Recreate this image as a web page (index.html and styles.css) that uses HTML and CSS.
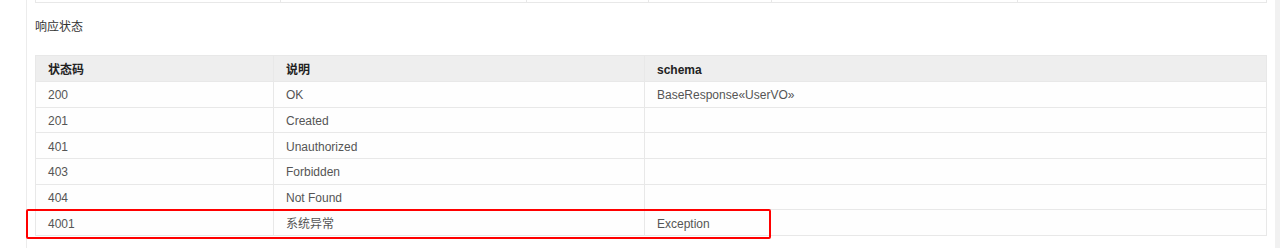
FILE: index.html
```html
<!DOCTYPE html>
<html lang="zh">
<head>
<meta charset="utf-8">
<title>响应状态</title>
<link rel="stylesheet" href="styles.css">
</head>
<body>
<div class="page">
  <div class="main">
    <div class="prev-table">
      <div class="pc w1"></div>
      <div class="pc w2"></div>
      <div class="pc w3"></div>
      <div class="pc w4"></div>
      <div class="pc w5"></div>
      <div class="pc w6"></div>
    </div>
    <div class="section-title">响应状态</div>
    <div class="table-wrap">
      <table class="resp">
        <colgroup>
          <col class="c1"><col class="c2"><col class="c3">
        </colgroup>
        <thead>
          <tr><th>状态码</th><th>说明</th><th>schema</th></tr>
        </thead>
        <tbody>
          <tr><td>200</td><td>OK</td><td>BaseResponse«UserVO»</td></tr>
          <tr><td>201</td><td>Created</td><td></td></tr>
          <tr><td>401</td><td>Unauthorized</td><td></td></tr>
          <tr><td>403</td><td>Forbidden</td><td></td></tr>
          <tr><td>404</td><td>Not Found</td><td></td></tr>
          <tr><td>4001</td><td>系统异常</td><td>Exception</td></tr>
        </tbody>
      </table>
      <div class="highlight"></div>
    </div>
  </div>
  <div class="scrollbar"></div>
</div>
</body>
</html>
```

FILE: styles.css
```css
html, body {
  margin: 0;
  padding: 0;
  background: #ffffff;
}
body {
  font-family: "Liberation Sans", "Noto Sans CJK SC", sans-serif;
  font-size: 12px;
  color: #555555;
}
.page {
  display: flex;
  height: 248px;
  overflow: hidden;
}
.main {
  margin-left: 26px;
  border-left: 1px solid #ececec;
  padding: 0 8px;
  width: 1232px;
  flex: none;
}
.scrollbar {
  flex: none;
  width: 5px;
  background: #f1f1f1;
}
.prev-table {
  display: flex;
  height: 2px;
  border-bottom: 1px solid #e8e8e8;
}
.pc {
  border-right: 1px solid #e8e8e8;
  box-sizing: border-box;
}
.pc:first-child { border-left: 1px solid #e8e8e8; }
.w1 { width: 246px; }
.w2 { width: 246px; }
.w3 { width: 122px; }
.w4 { width: 123px; }
.w5 { width: 246px; }
.w6 { width: 249px; }
.section-title {
  margin-top: 16px;
  line-height: 16px;
  color: #333333;
  font-size: 12px;
}
.table-wrap {
  position: relative;
  margin-top: 20px;
}
.resp {
  width: 1232px;
  border-collapse: collapse;
  table-layout: fixed;
}
.c1 { width: 238px; }
.c2 { width: 371px; }
.resp th,
.resp td {
  border: 1px solid #e8e8e8;
  padding: 2px 12px 0;
  text-align: left;
  line-height: 16px;
}
.resp th {
  background: #eeeeee;
  color: #222222;
  font-weight: bold;
  height: 26px;
  box-sizing: border-box;
}
.resp td {
  height: 25.7px;
  box-sizing: border-box;
  background: #fefefe;
}
.highlight {
  position: absolute;
  left: -9px;
  top: 154px;
  width: 745px;
  height: 30px;
  box-sizing: border-box;
  border: 2px solid #ff0000;
  border-radius: 2px;
}
```
